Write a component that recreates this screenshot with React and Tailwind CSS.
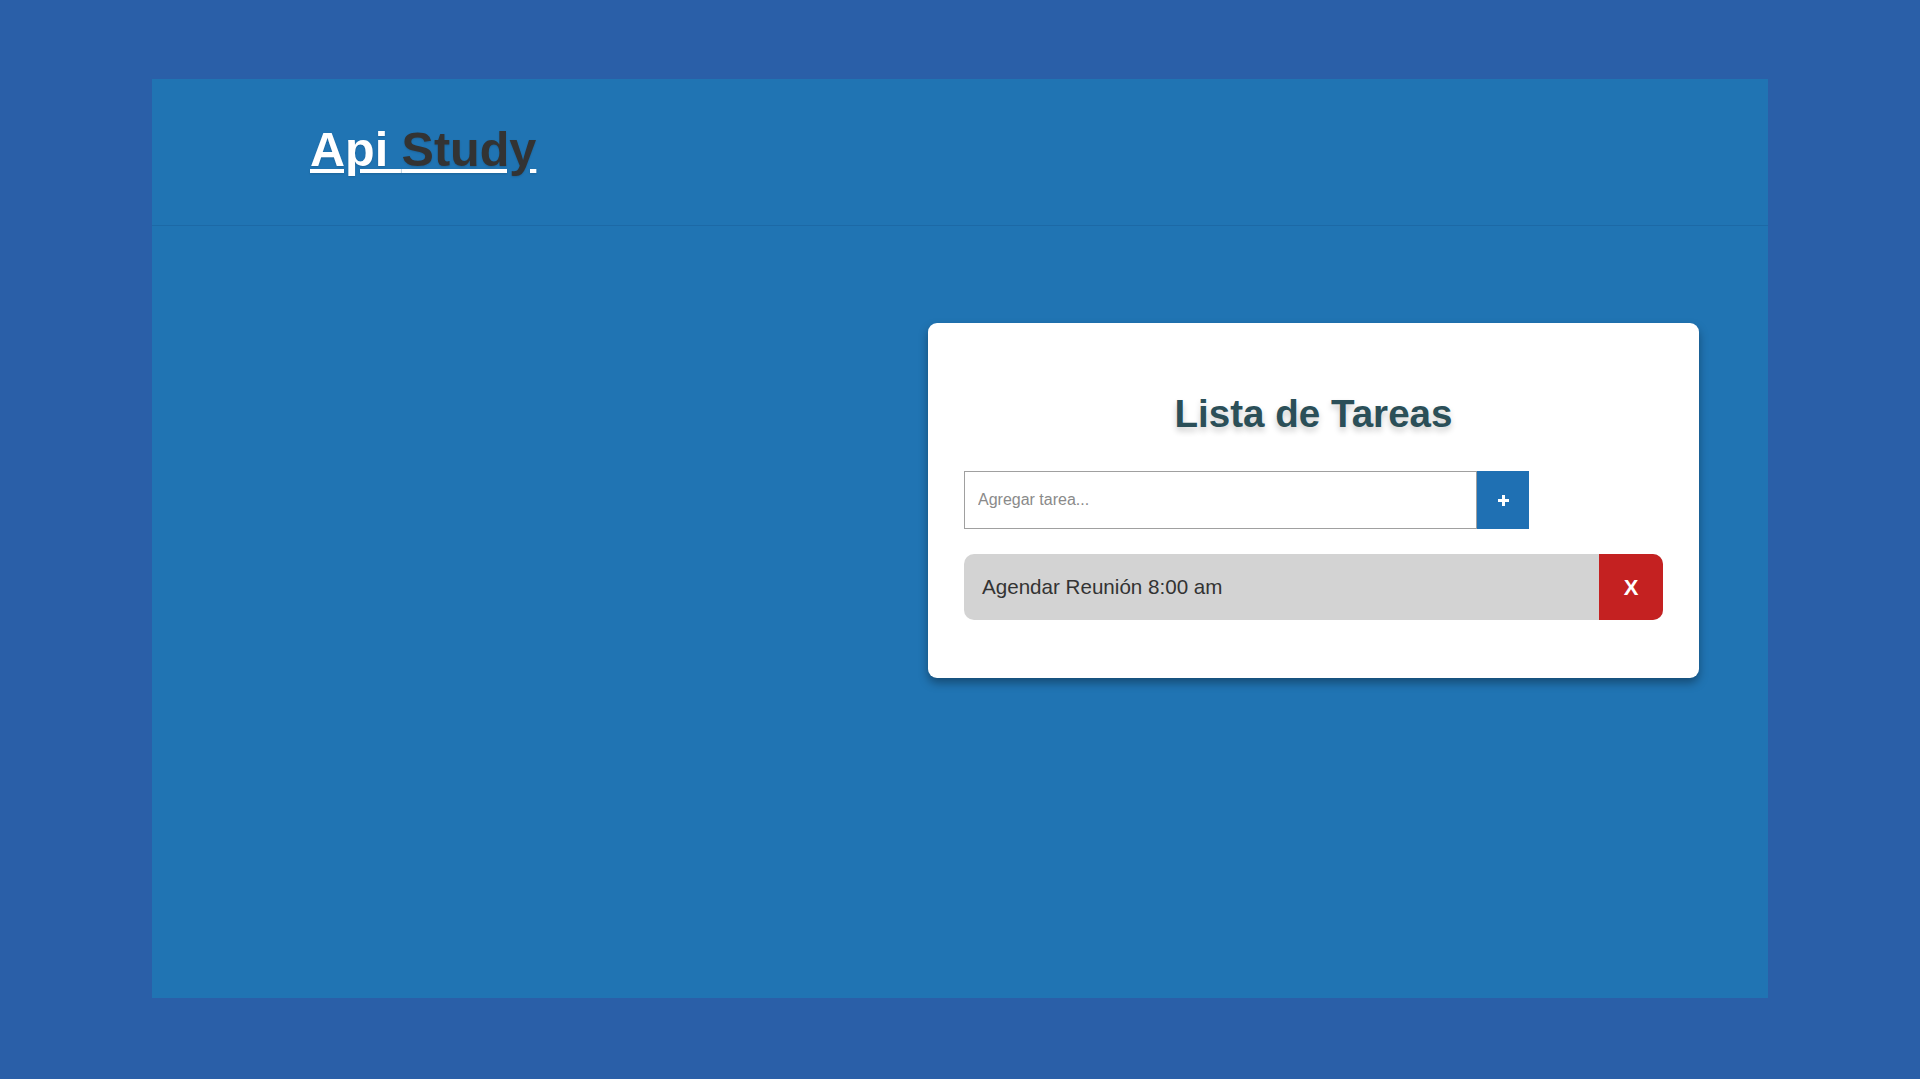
import React from "react";

export default function App() {
  return (
    <div
      className="min-h-[1079px] w-full bg-[#2a5fa8] pt-[79px] pb-[81px]"
      style={{ fontFamily: '"Liberation Sans", Arial, sans-serif' }}
    >
      <div className="mx-[152px] h-[919px] bg-[#2074b3] flex flex-col">
        <header className="h-[147px] shrink-0 flex items-center pl-[158px] border-b border-[#1c69a6]">
          <a
            href="#"
            className="text-[48.5px] font-bold text-white underline leading-none pb-[6px] [text-shadow:0_1px_2px_rgba(0,0,0,0.15)]"
          >
            Api <span className="text-[#333333]">Study</span>
          </a>
        </header>
        <main className="flex-1 flex justify-end pr-[69px] pt-[97px]">
          <div className="w-[771px] h-[355px] bg-white rounded-[9px] shadow-[0_5px_10px_rgba(0,0,0,0.35)] px-[36px] pt-[70px]">
            <h1 className="text-center text-[38.6px] font-bold leading-[42px] text-[#2b4f58] [text-shadow:0_4px_6px_rgba(0,0,0,0.2)]">
              Lista de Tareas
            </h1>
            <div className="mt-[36px] flex h-[58px]">
              <input
                type="text"
                placeholder="Agregar tarea..."
                className="w-[513px] h-full border border-[#a0a0a0] bg-white pl-[13px] text-[16px] text-[#333] placeholder:text-[#8a8a8a] outline-none"
              />
              <button className="w-[52px] h-full bg-[#1f70b3] flex items-center justify-center">
                <svg width="11" height="11" viewBox="0 0 11 11">
                  <rect x="4" y="0" width="3" height="11" fill="white" />
                  <rect x="0" y="4" width="11" height="3" fill="white" />
                </svg>
              </button>
            </div>
            <div className="mt-[25px] h-[66px] rounded-[10px] bg-[#d3d3d3] flex items-center overflow-hidden">
              <span className="flex-1 pl-[18px] text-[20.6px] text-[#333333]">
                Agendar Reunión 8:00 am
              </span>
              <button className="w-[64px] h-full bg-[#c42121] text-white font-bold text-[22px] flex items-center justify-center">
                X
              </button>
            </div>
          </div>
        </main>
      </div>
    </div>
  );
}
